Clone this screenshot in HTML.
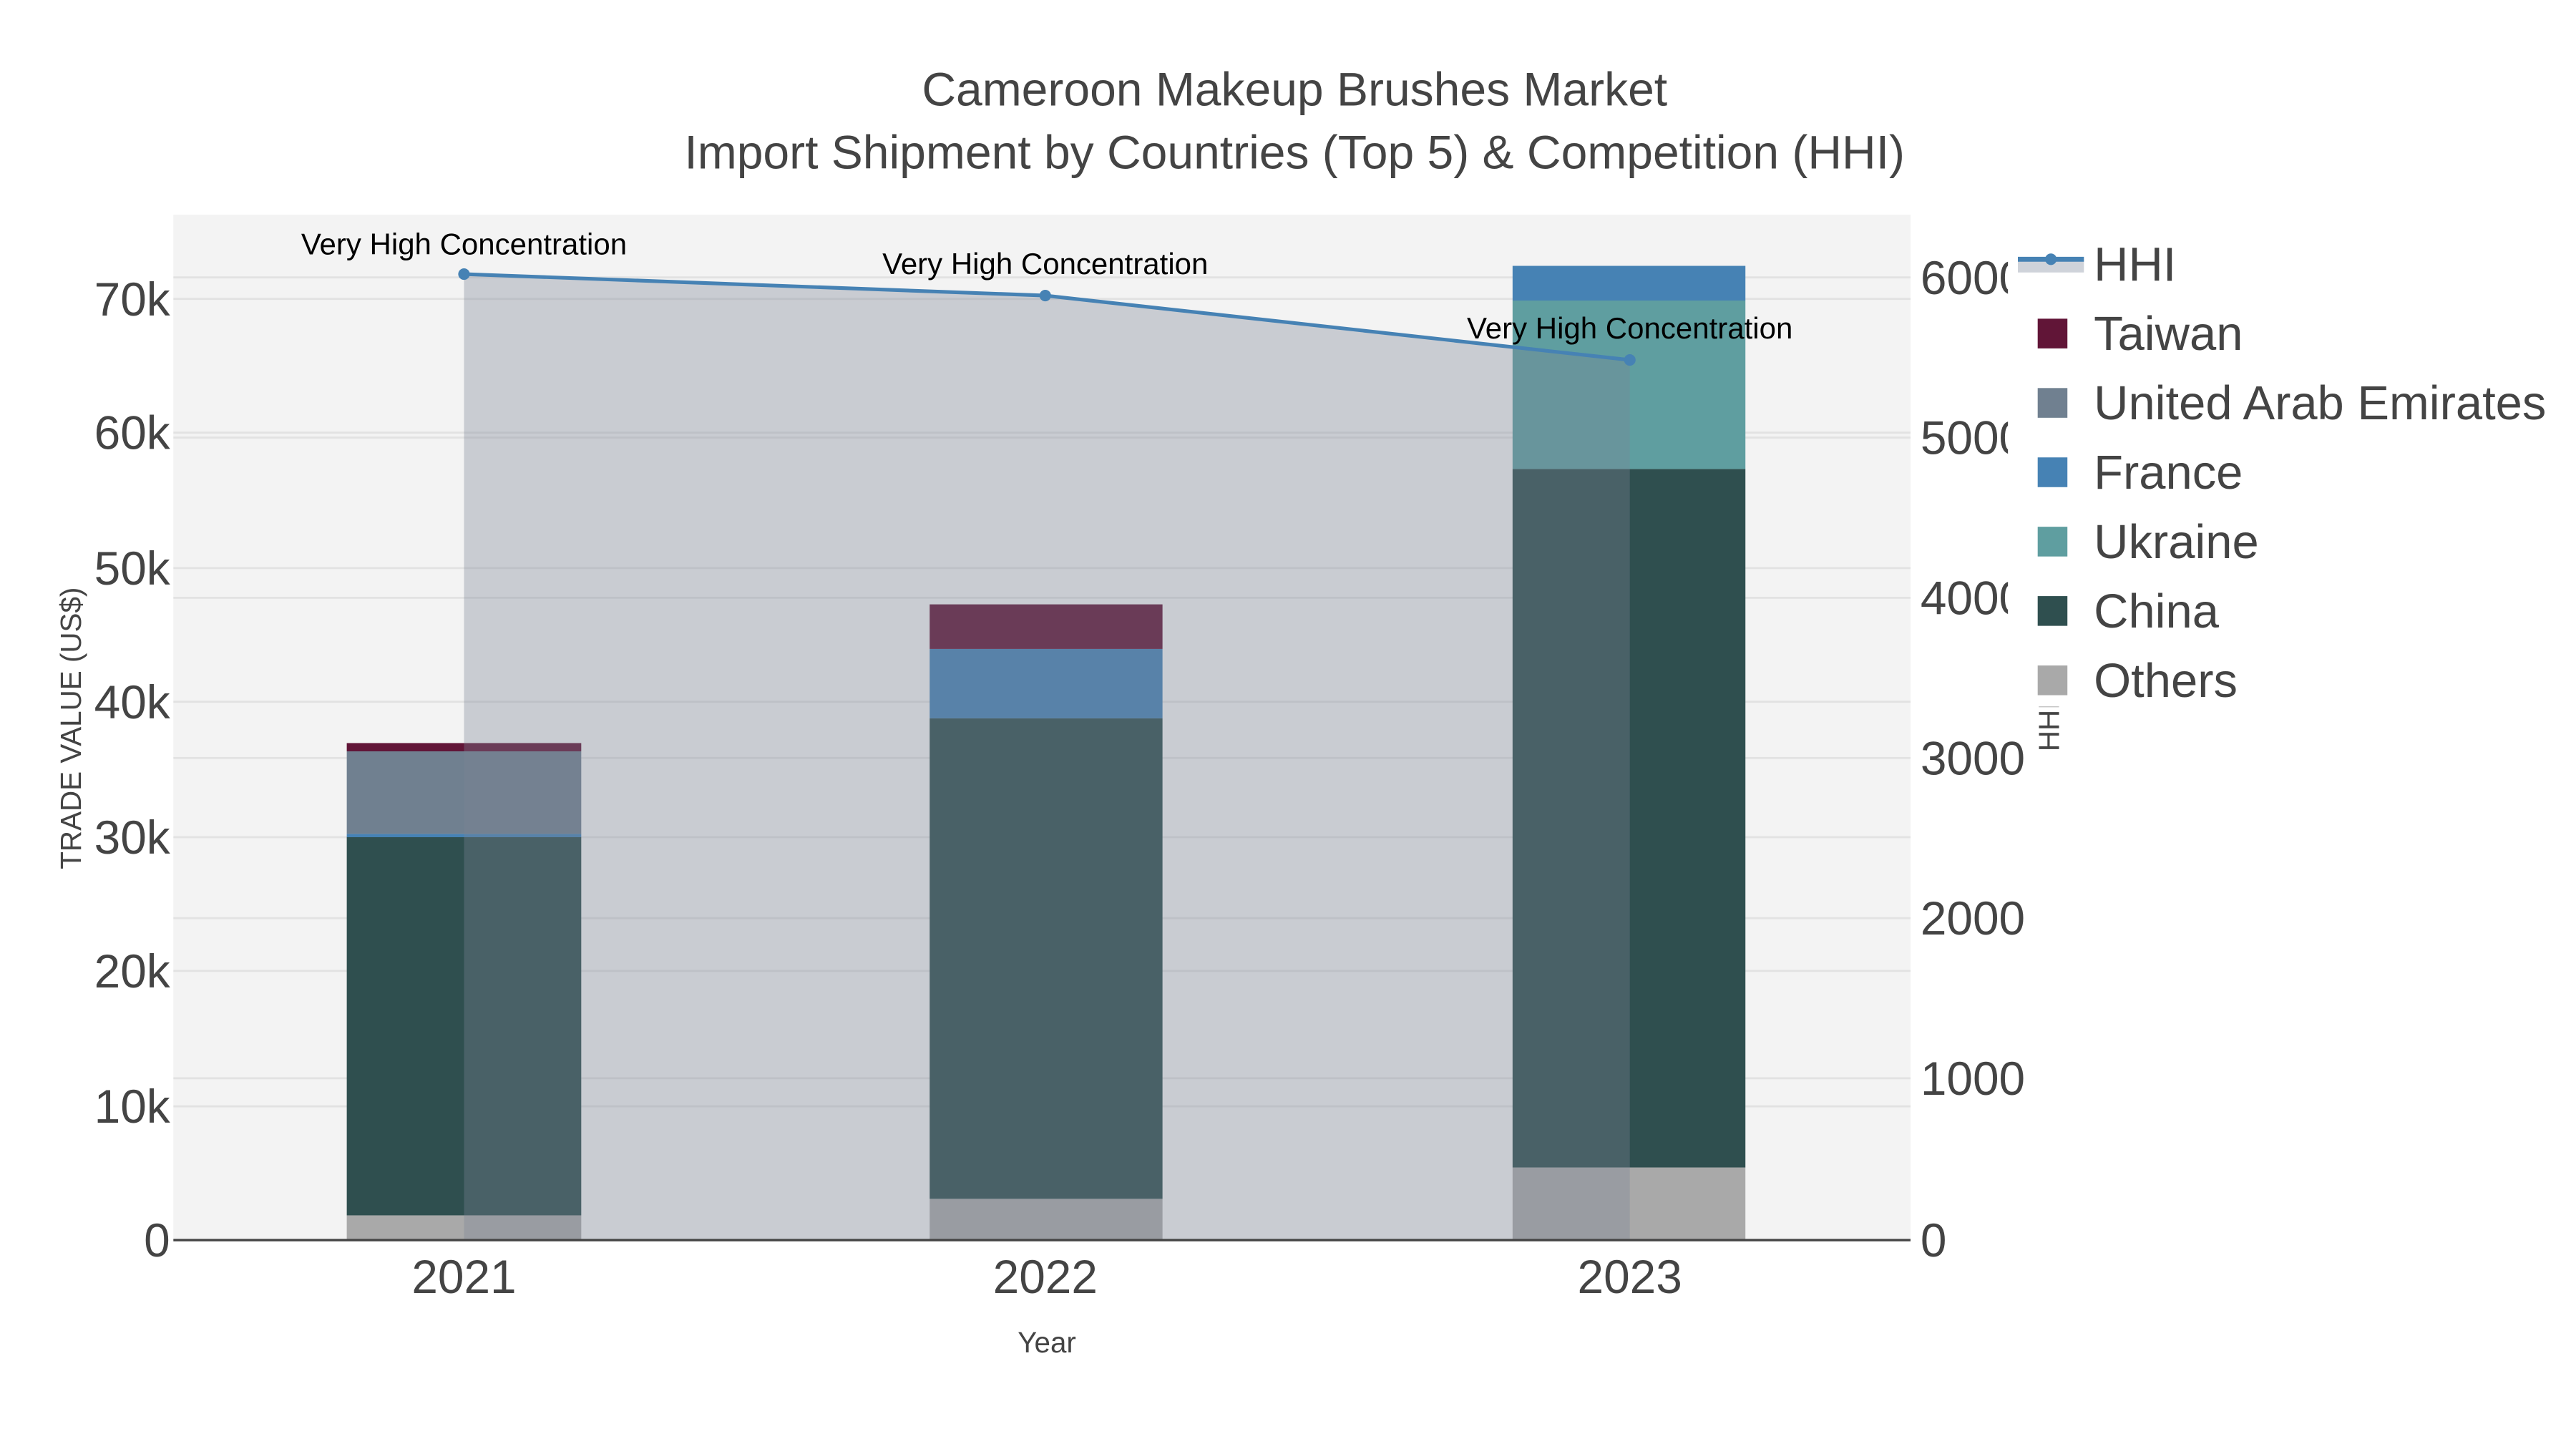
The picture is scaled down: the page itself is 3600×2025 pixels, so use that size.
<!DOCTYPE html>
<html><head><meta charset="utf-8"><style>html,body{margin:0;padding:0;background:#fff}svg{display:block}</style></head>
<body>
<svg width="3600" height="2025" viewBox="0 0 1560 877.5" preserveAspectRatio="none" xmlns="http://www.w3.org/2000/svg" font-family="Liberation Sans, sans-serif">
<rect width="1560" height="877.5" fill="#fff"/>
<rect x="105" y="130" width="1052" height="621" fill="#f3f3f3"/>
<g stroke="#e2e2e2" stroke-width="1.2">
<line x1="105" x2="1157" y1="670" y2="670"/><line x1="105" x2="1157" y1="588" y2="588"/><line x1="105" x2="1157" y1="507" y2="507"/><line x1="105" x2="1157" y1="425" y2="425"/><line x1="105" x2="1157" y1="344" y2="344"/><line x1="105" x2="1157" y1="262" y2="262"/><line x1="105" x2="1157" y1="181" y2="181"/>
<line x1="105" x2="1157" y1="653" y2="653"/><line x1="105" x2="1157" y1="556" y2="556"/><line x1="105" x2="1157" y1="459" y2="459"/><line x1="105" x2="1157" y1="362" y2="362"/><line x1="105" x2="1157" y1="265" y2="265"/><line x1="105" x2="1157" y1="168" y2="168"/>
</g>
<rect x="210" y="736" width="142" height="15" fill="#a9a9a9"/>
<rect x="210" y="507" width="142" height="229" fill="#2f4f4f"/>
<rect x="210" y="505" width="142" height="2" fill="#4682b4"/>
<rect x="210" y="455" width="142" height="50" fill="#708090"/>
<rect x="210" y="450" width="142" height="5" fill="#611537"/>
<rect x="563" y="726" width="141" height="25" fill="#a9a9a9"/>
<rect x="563" y="435" width="141" height="291" fill="#2f4f4f"/>
<rect x="563" y="393" width="141" height="42" fill="#4682b4"/>
<rect x="563" y="366" width="141" height="27" fill="#611537"/>
<rect x="916" y="707" width="141" height="44" fill="#a9a9a9"/>
<rect x="916" y="284" width="141" height="423" fill="#2f4f4f"/>
<rect x="916" y="182" width="141" height="102" fill="#5f9ea0"/>
<rect x="916" y="161" width="141" height="21" fill="#4682b4"/>
<polygon points="281,166 633,179 987,218 987,751 281,751" fill="rgb(123,133,149)" fill-opacity="0.35"/>
<line x1="105" x2="1157" y1="751" y2="751" stroke="#444" stroke-width="1.5"/>
<polyline points="281,166 633,179 987,218" fill="none" stroke="#4682b4" stroke-width="2.2"/>
<circle cx="281" cy="166" r="3.5" fill="#4682b4"/><circle cx="633" cy="179" r="3.5" fill="#4682b4"/><circle cx="987" cy="218" r="3.5" fill="#4682b4"/>
<g font-size="18.2" fill="#000" text-anchor="middle">
<text x="281" y="154">Very High Concentration</text>
<text x="633" y="166">Very High Concentration</text>
<text x="987" y="205">Very High Concentration</text>
</g>
<g font-size="28.6" fill="#444" text-anchor="middle">
<text x="784" y="64">Cameroon Makeup Brushes Market</text>
<text x="784" y="102">Import Shipment by Countries (Top 5) &amp; Competition (HHI)</text>
</g>
<g font-size="28.5" fill="#444" text-anchor="end">
<text x="103" y="761">0</text><text x="103" y="680">10k</text><text x="103" y="598">20k</text><text x="103" y="517">30k</text><text x="103" y="435">40k</text><text x="103" y="354">50k</text><text x="103" y="272">60k</text><text x="103" y="191">70k</text>
</g>
<g font-size="28.5" fill="#444">
<text x="1163" y="761">0</text><text x="1163" y="663">1000</text><text x="1163" y="566">2000</text><text x="1163" y="469">3000</text><text x="1163" y="372">4000</text><text x="1163" y="275">5000</text><text x="1163" y="178">6000</text>
</g>
<g font-size="28.5" fill="#444" text-anchor="middle">
<text x="281" y="783">2021</text><text x="633" y="783">2022</text><text x="987" y="783">2023</text>
</g>
<text x="634" y="819" font-size="17.5" fill="#444" text-anchor="middle">Year</text>
<text transform="translate(49,441) rotate(-90)" font-size="17.5" fill="#444" text-anchor="middle">TRADE VALUE (US$)</text>
<text transform="translate(1247,440) rotate(-90)" font-size="17.5" fill="#444" text-anchor="middle">HHI</text>
<rect x="1216" y="138" width="344" height="290" fill="#fff"/>
<rect x="1222" y="157" width="40" height="8" fill="#cfd3da"/>
<line x1="1222" x2="1262" y1="157" y2="157" stroke="#4682b4" stroke-width="3"/>
<circle cx="1242" cy="157" r="3.5" fill="#4682b4"/>
<rect x="1234" y="193" width="18" height="18" fill="#611537"/>
<rect x="1234" y="235" width="18" height="18" fill="#708090"/>
<rect x="1234" y="277" width="18" height="18" fill="#4682b4"/>
<rect x="1234" y="319" width="18" height="18" fill="#5f9ea0"/>
<rect x="1234" y="361" width="18" height="18" fill="#2f4f4f"/>
<rect x="1234" y="403" width="18" height="18" fill="#a9a9a9"/>
<g font-size="29" fill="#444">
<text x="1268" y="170">HHI</text>
<text x="1268" y="212">Taiwan</text>
<text x="1268" y="254">United Arab Emirates</text>
<text x="1268" y="296">France</text>
<text x="1268" y="338">Ukraine</text>
<text x="1268" y="380">China</text>
<text x="1268" y="422">Others</text>
</g>
</svg>
</body></html>
